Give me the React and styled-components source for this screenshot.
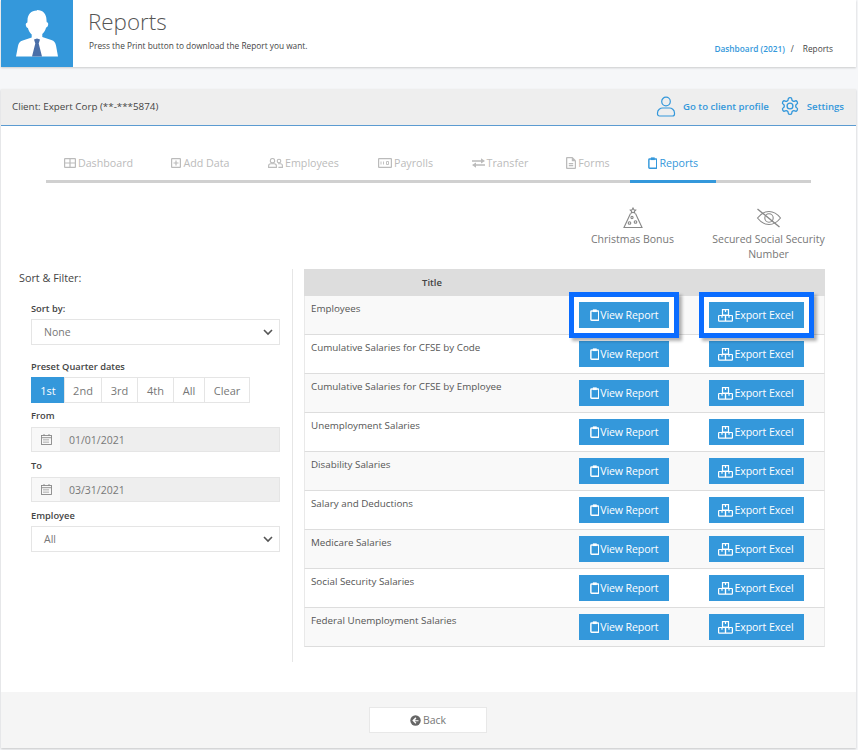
import React from 'react';
import styled, { createGlobalStyle } from 'styled-components';

const GlobalStyle = createGlobalStyle`
  html, body {
    margin: 0;
    padding: 0;
    background: #f6f7f9;
    font-family: "Open Sans", "Liberation Sans", sans-serif;
    color: #555;
  }
  * {
    box-sizing: border-box;
  }
`;

const Page = styled.div`
  width: 858px;
  height: 750px;
  padding: 0 1px;
  overflow: hidden;
`;

const TopBar = styled.header`
  height: 67px;
  width: 855px;
  background: #fff;
  box-shadow: 0 1px 2px rgba(0, 0, 0, 0.18);
  display: flex;
  margin-bottom: 22px;
`;

const AvatarBlock = styled.div`
  width: 72px;
  height: 67px;
  background: #3498db;
  display: flex;
  align-items: flex-start;
  justify-content: center;
  padding-top: 10px;
`;

const TitleBlock = styled.div`
  padding: 6px 0 0 15px;
  flex: 1;
`;

const PageTitle = styled.h1`
  margin: 0;
  font-size: 22.4px;
  line-height: 32px;
  font-weight: 300;
  color: #555;
`;

const PageSub = styled.p`
  margin: 2px 0 0 1px;
  font-size: 8.3px;
  line-height: 12px;
  color: #444;
`;

const Breadcrumb = styled.div`
  align-self: flex-end;
  display: flex;
  gap: 6px;
  padding: 0 23px 12px 0;
  font-size: 8.3px;
  line-height: 12px;
  color: #444;
  a {
    color: #3498db;
    font-weight: 600;
  }
  span + span {
    margin-left: 3px;
  }
`;

const Card = styled.main`
  width: 855px;
  background: #fff;
  box-shadow: 0 1px 2px rgba(0, 0, 0, 0.2);
`;

const ClientBar = styled.div`
  height: 37px;
  background: #eee;
  border-bottom: 1px solid #5b9bd1;
  display: flex;
  align-items: center;
  justify-content: space-between;
  padding: 0 12px 2px 11px;
  font-size: 9.8px;
  color: #444;
`;

const ClientLinks = styled.div`
  display: flex;
  align-items: center;
  gap: 11px;
`;

const ClientLink = styled.a`
  display: flex;
  align-items: center;
  gap: 7px;
  color: #3498db;
  font-weight: 600;
  font-size: 9.6px;
`;

const Tabs = styled.nav`
  margin: 24px 45px 0;
  height: 33px;
  border-bottom: 3px solid #d0d0d0;
  display: flex;
`;

const Tab = styled.a`
  width: ${(p) => p.$w}px;
  height: 33px;
  padding-bottom: 4px;
  display: flex;
  align-items: center;
  justify-content: center;
  gap: 2px;
  font-size: 10.7px;
  color: ${(p) => (p.$active ? '#3498db' : '#bbb')};
  border-bottom: 3px solid ${(p) => (p.$active ? '#3498db' : 'transparent')};
`;

const OptionRow = styled.div`
  display: flex;
  justify-content: flex-end;
  height: 64px;
  padding: 23px 26px 0 0;
`;

const OptionCell = styled.div`
  width: ${(p) => p.$w}px;
  display: flex;
  flex-direction: column;
  align-items: center;
  text-align: center;
  font-size: 10.5px;
  line-height: 15px;
  color: #777;
`;

const OptionIcon = styled.div`
  flex: none;
  height: 24px;
  margin-bottom: 2px;
  display: flex;
  align-items: center;
`;

const Body = styled.div`
  display: flex;
  margin-top: 22px;
  padding-bottom: 30px;
`;

const Sidebar = styled.aside`
  width: 292px;
  height: 393px;
  border-right: 1px solid #e6e6e6;
  padding: 2px 12px 0 18px;
`;

const SideTitle = styled.div`
  font-size: 10.8px;
  line-height: 14px;
  margin-bottom: 18px;
  color: #444;
`;

const Field = styled.div`
  padding-left: 12px;
  margin-bottom: ${(p) => p.$mb ?? 8}px;
`;

const FieldLabel = styled.div`
  font-size: 9.3px;
  font-weight: 600;
  line-height: 12px;
  margin-bottom: 5px;
  color: #444;
`;

const FakeSelect = styled.div`
  height: 26px;
  margin-top: -1px;
  border: 1px solid #e5e5e5;
  display: flex;
  align-items: center;
  justify-content: space-between;
  padding: 0 5px 0 12px;
  font-size: 10.5px;
  color: #777;
  background: #fff;
`;

const Presets = styled.div`
  display: flex;
  height: 26px;
  margin-top: -1px;
`;

const Preset = styled.div`
  width: ${(p) => p.$w}px;
  border: 1px solid #e5e5e5;
  margin-right: -1px;
  display: flex;
  align-items: center;
  justify-content: center;
  font-size: 11px;
  color: ${(p) => (p.$active ? '#fff' : '#777')};
  background: ${(p) => (p.$active ? '#3498db' : '#fff')};
  border-color: ${(p) => (p.$active ? '#3498db' : '#e5e5e5')};
`;

const DateInput = styled.div`
  height: 25px;
  display: flex;
  border: 1px solid #e5e5e5;
  background: #eee;
`;

const DateAddon = styled.div`
  width: 28px;
  background: #f8f8f8;
  display: flex;
  align-items: center;
  justify-content: center;
`;

const DateValue = styled.div`
  padding-left: 9px;
  display: flex;
  align-items: center;
  font-size: 10.5px;
  color: #777;
`;

const TableWrap = styled.section`
  margin-left: 11px;
  width: 521px;
`;

const TableHead = styled.div`
  height: 27px;
  background: #ddd;
  display: grid;
  grid-template-columns: 256px 128px 137px;
  align-items: center;
  text-align: center;
  font-size: 9.5px;
  font-weight: 600;
  color: #444;
`;

const Row = styled.div`
  height: 39px;
  display: grid;
  grid-template-columns: 255px 128px 136px;
  background: ${(p) => (p.$odd ? '#f9f9f9' : '#fff')};
  border: 1px solid #e9e9e9;
  border-top: 0;
  border-bottom-color: #ddd;
  padding-top: 6px;
`;

const RowTitle = styled.div`
  font-size: 9.8px;
  line-height: 13px;
  color: #555;
  padding-left: 6px;
`;

const ActionCell = styled.div`
  display: flex;
  justify-content: center;
`;

const ActionButton = styled.a`
  width: ${(p) => p.$w}px;
  height: 26px;
  background: #3498db;
  color: #fff;
  font-size: 10.6px;
  display: flex;
  align-items: center;
  justify-content: center;
  gap: 1px;
  position: relative;
  letter-spacing: -0.1px;
  ${(p) =>
    p.$focus &&
    `
    z-index: 1;
    box-shadow: 0 0 0 5px #fff, 0 0 0 10px #0a6cff, 3px 3px 3px 10px rgba(0, 0, 0, 0.3);
  `}
`;

const Footer = styled.footer`
  height: 56px;
  background: #f5f5f5;
  display: flex;
  align-items: center;
  justify-content: center;
  padding-right: 1px;
`;

const BackButton = styled.a`
  width: 118px;
  height: 26px;
  border: 1px solid #e8e8e8;
  background: #fff;
  display: flex;
  align-items: center;
  justify-content: center;
  gap: 2px;
  font-size: 10.5px;
  color: #777;
`;

const PersonLogo = () => (
  <svg width="44" height="47" viewBox="0 0 44 47">
    <path fill="#fff" d="M22 0.5c-6 0-9.5 4-9.5 10 0 1-.1 1.700-.3 2.200-1.300.2-1.700 1.300-1.300 2.800.3 1.400 1 2.400 2 2.600.7 2.800 2.100 5 3.800 6.500v3l-9 3c-3 1-4 2.500-4.700 5.400L1 46.500h42l-2-11c-.7-2.900-1.700-4.400-4.700-5.400l-9-3v-3c1.700-1.500 3.100-3.700 3.800-6.500 1-.2 1.700-1.200 2-2.600.4-1.500 0-2.600-1.300-2.800-.2-.5-.3-1.200-.3-2.200 0-6-3.500-10-9.500-10z" />
    <path fill="#4a6fa8" d="M19 29.500l3-1 3 1-1.300 4 3.300 13h-10l3.300-13z" />
  </svg>
);

const UserLine = () => (
  <svg width="20" height="21" viewBox="0 0 20 21" fill="none" stroke="#3498db" strokeWidth="1.200">
    <circle cx="10" cy="5.500" r="4.300" />
    <path d="M1.500 17c0-3.500 3-5 5-5h7c2 0 5 1.500 5 5v1c0 1.200-.8 2-2 2h-13c-1.200 0-2-.8-2-2z" />
  </svg>
);

const GearLine = () => (
  <svg width="20" height="20" viewBox="0 0 24 24" fill="none" stroke="#3498db" strokeWidth="1.600" strokeLinecap="round" strokeLinejoin="round">
    <path d="M12.220 2h-.44a2 2 0 0 0-2 2v.18a2 2 0 0 1-1 1.730l-.43.25a2 2 0 0 1-2 0l-.15-.08a2 2 0 0 0-2.730.73l-.22.380a2 2 0 0 0 .73 2.730l.15.100a2 2 0 0 1 1 1.720v.510a2 2 0 0 1-1 1.740l-.15.090a2 2 0 0 0-.73 2.730l.22.380a2 2 0 0 0 2.730.730l.15-.080a2 2 0 0 1 2 0l.43.250a2 2 0 0 1 1 1.730V20a2 2 0 0 0 2 2h.44a2 2 0 0 0 2-2v-.18a2 2 0 0 1 1-1.730l.43-.25a2 2 0 0 1 2 0l.15.080a2 2 0 0 0 2.730-.730l.22-.390a2 2 0 0 0-.73-2.730l-.15-.080a2 2 0 0 1-1-1.740v-.500a2 2 0 0 1 1-1.740l.15-.090a2 2 0 0 0 .73-2.730l-.22-.380a2 2 0 0 0-2.730-.730l-.15.080a2 2 0 0 1-2 0l-.43-.250a2 2 0 0 1-1-1.730V4a2 2 0 0 0-2-2z" />
    <circle cx="12" cy="12" r="3.500" />
  </svg>
);

const TableIcon = () => (
  <svg width="12" height="10" viewBox="0 0 12 10" fill="none" stroke="currentColor" strokeWidth="1.200">
    <rect x="0.600" y="0.600" width="10.800" height="8.800" rx="0.500" />
    <path d="M6 .5v9M.5 5h11" />
  </svg>
);

const PlusBoxIcon = () => (
  <svg width="10" height="10" viewBox="0 0 10 10" fill="none" stroke="currentColor" strokeWidth="1.200">
    <rect x="0.600" y="0.600" width="8.800" height="8.800" rx="0.500" />
    <path d="M5 2.500v5M2.500 5h5" />
  </svg>
);

const UsersIcon = () => (
  <svg width="15" height="10" viewBox="0 0 15 10" fill="none" stroke="currentColor" strokeWidth="1.100">
    <circle cx="4.500" cy="2.700" r="2.200" />
    <path d="M.6 9.400V8c0-1.300 1-2.200 2.200-2.200h3.400C7.500 5.800 8.400 6.700 8.400 8v1.400z" />
    <circle cx="11" cy="3" r="1.800" />
    <path d="M10 5.800h2.500c1 0 1.900.9 1.900 2v1.600h-4" />
  </svg>
);

const MoneyIcon = () => (
  <svg width="14" height="10" viewBox="0 0 14 10" fill="none" stroke="currentColor" strokeWidth="1.200">
    <rect x="0.600" y="0.600" width="12.800" height="8.800" rx="0.500" />
    <path d="M3 3.500v3M5.500 3.500v3M8.500 3.500v3h2v-3z" strokeWidth="0.900" />
  </svg>
);

const TransferIcon = () => (
  <svg width="13" height="10" viewBox="0 0 13 10" fill="currentColor">
    <path d="M0 2.300h9V0.300L13 3 9 5.400V3.700H0zM13 6.300H4V4.600L0 7l4 2.700V7.700h9z" />
  </svg>
);

const FormIcon = () => (
  <svg width="10" height="12" viewBox="0 0 10 12">
    <path fill="currentColor" d="M1 0h5.500L10 3.500V11a1 1 0 0 1-1 1H1a1 1 0 0 1-1-1V1a1 1 0 0 1 1-1z" />
    <path fill="#fff" d="M1.300 1.300h4.500v3h3v6.400H1.300z" />
    <path fill="currentColor" d="M2.800 6h4.400v1.200H2.800zM2.800 8h4.400v1.200H2.800z" />
  </svg>
);

const ClipIcon = ({ size = 12 }) => (
  <svg width={size * 0.8} height={size} viewBox="0 0 10 12.500" fill="none" stroke="currentColor" strokeWidth="1.500">
    <rect x="0.900" y="2" width="8.200" height="9.700" rx="0.800" />
    <path fill="currentColor" stroke="none" d="M3 .4h4v2.800H3z" />
  </svg>
);

const BoxesIcon = () => (
  <svg width="15" height="13" viewBox="0 0 15 13" fill="none" stroke="currentColor" strokeWidth="1.200">
    <rect x="4.500" y="0.600" width="6" height="5.500" />
    <rect x="0.600" y="6.500" width="6.900" height="5.700" rx="0.600" />
    <rect x="7.500" y="6.500" width="6.900" height="5.700" rx="0.600" />
    <path d="M7.500 .5v2.500M4 6.500v2.200M11 6.500v2.200" />
  </svg>
);

const TreeIcon = () => (
  <svg width="20" height="22" viewBox="0 0 20 22" fill="none" stroke="#888" strokeWidth="1.100">
    <path d="M10 1l.9 1.700 1.800.3-1.300 1.300.3 1.800L10 5.300 8.300 6.100l.3-1.800L7.300 3l1.800-.3z" />
    <path d="M7.500 6.500L1 20.500h18l-6.500-14" />
    <circle cx="9" cy="10.500" r="1.100" />
    <circle cx="6.500" cy="16" r="1.300" />
    <circle cx="12.500" cy="15" r="1.300" />
  </svg>
);

const EyeOffIcon = () => (
  <svg width="26" height="20" viewBox="0 0 26 20" fill="none" stroke="#888" strokeWidth="1.100">
    <path d="M1.500 10C5 5.500 9 3.500 13 3.500s8 2 11.500 6.500C21 14.500 17 16.500 13 16.500S5 14.500 1.500 10z" />
    <circle cx="13" cy="10" r="4.200" />
    <path d="M1.500 1l22 18" strokeWidth="1.300" />
  </svg>
);

const Chevron = () => (
  <svg width="12" height="8" viewBox="0 0 12 8" fill="none" stroke="#555" strokeWidth="1.600">
    <path d="M2 2l4 4 4-4" />
  </svg>
);

const CalendarIcon = () => (
  <svg width="11" height="11" viewBox="0 0 11 11" fill="none" stroke="#888" strokeWidth="0.900">
    <rect x="0.500" y="1.500" width="10" height="9" />
    <path d="M.5 3.700h10M3 0v2M8 0v2" />
    <path d="M2.500 5.500h6M2.500 7h6M2.500 8.500h6" strokeDasharray="1 1" />
  </svg>
);

const BackIcon = () => (
  <svg width="11" height="11" viewBox="0 0 11 11">
    <circle cx="5.500" cy="5.500" r="5.200" fill="#666" />
    <path fill="#fff" d="M5.500 2.300L2.300 5.500l3.200 3.200.9-.9-1.600-1.600h3.700V5.200H4.800l1.600-1.600z" />
  </svg>
);

const tabs = [
  { label: 'Dashboard', w: 105, icon: <TableIcon /> },
  { label: 'Add Data', w: 99, icon: <PlusBoxIcon /> },
  { label: 'Employees', w: 107, icon: <UsersIcon /> },
  { label: 'Payrolls', w: 97, icon: <MoneyIcon /> },
  { label: 'Transfer', w: 92, icon: <TransferIcon /> },
  { label: 'Forms', w: 84, icon: <FormIcon /> },
  { label: 'Reports', w: 86, icon: <ClipIcon />, active: true },
];

const presets = [
  { label: '1st', w: 34, active: true },
  { label: '2nd', w: 38 },
  { label: '3rd', w: 37 },
  { label: '4th', w: 37 },
  { label: 'All', w: 32 },
  { label: 'Clear', w: 46 },
];

const reports = [
  'Employees',
  'Cumulative Salaries for CFSE by Code',
  'Cumulative Salaries for CFSE by Employee',
  'Unemployment Salaries',
  'Disability Salaries',
  'Salary and Deductions',
  'Medicare Salaries',
  'Social Security Salaries',
  'Federal Unemployment Salaries',
];

export default function App() {
  return (
    <Page>
      <GlobalStyle />
      <TopBar>
        <AvatarBlock>
          <PersonLogo />
        </AvatarBlock>
        <TitleBlock>
          <PageTitle>Reports</PageTitle>
          <PageSub>Press the Print button to download the Report you want.</PageSub>
        </TitleBlock>
        <Breadcrumb>
          <a>Dashboard (2021)</a>
          <span>/</span>
          <span>Reports</span>
        </Breadcrumb>
      </TopBar>

      <Card>
        <ClientBar>
          <span>Client: Expert Corp (**-***5874)</span>
          <ClientLinks>
            <ClientLink>
              <UserLine />
              Go to client profile
            </ClientLink>
            <ClientLink>
              <GearLine />
              Settings
            </ClientLink>
          </ClientLinks>
        </ClientBar>

        <Tabs>
          {tabs.map((t) => (
            <Tab key={t.label} $w={t.w} $active={t.active}>
              {t.icon}
              {t.label}
            </Tab>
          ))}
        </Tabs>

        <OptionRow>
          <OptionCell $w={149}>
            <OptionIcon>
              <TreeIcon />
            </OptionIcon>
            Christmas Bonus
          </OptionCell>
          <OptionCell $w={123}>
            <OptionIcon>
              <EyeOffIcon />
            </OptionIcon>
            Secured Social Security Number
          </OptionCell>
        </OptionRow>

        <Body>
          <Sidebar>
            <SideTitle>Sort &amp; Filter:</SideTitle>
            <Field $mb={16}>
              <FieldLabel>Sort by:</FieldLabel>
              <FakeSelect>
                None
                <Chevron />
              </FakeSelect>
            </Field>
            <Field $mb={7}>
              <FieldLabel>Preset Quarter dates</FieldLabel>
              <Presets>
                {presets.map((p) => (
                  <Preset key={p.label} $w={p.w} $active={p.active}>
                    {p.label}
                  </Preset>
                ))}
              </Presets>
            </Field>
            <Field>
              <FieldLabel>From</FieldLabel>
              <DateInput>
                <DateAddon>
                  <CalendarIcon />
                </DateAddon>
                <DateValue>01/01/2021</DateValue>
              </DateInput>
            </Field>
            <Field>
              <FieldLabel>To</FieldLabel>
              <DateInput>
                <DateAddon>
                  <CalendarIcon />
                </DateAddon>
                <DateValue>03/31/2021</DateValue>
              </DateInput>
            </Field>
            <Field>
              <FieldLabel>Employee</FieldLabel>
              <FakeSelect>
                All
                <Chevron />
              </FakeSelect>
            </Field>
          </Sidebar>

          <TableWrap>
            <TableHead>
              <span>Title</span>
            </TableHead>
            {reports.map((title, i) => (
              <Row key={title} $odd={i % 2 === 0}>
                <RowTitle>{title}</RowTitle>
                <ActionCell>
                  <ActionButton $w={90} $focus={i === 0}>
                    <ClipIcon />
                    View Report
                  </ActionButton>
                </ActionCell>
                <ActionCell>
                  <ActionButton $w={95} $focus={i === 0}>
                    <BoxesIcon />
                    Export Excel
                  </ActionButton>
                </ActionCell>
              </Row>
            ))}
          </TableWrap>
        </Body>

        <Footer>
          <BackButton>
            <BackIcon />
            Back
          </BackButton>
        </Footer>
      </Card>
    </Page>
  );
}
